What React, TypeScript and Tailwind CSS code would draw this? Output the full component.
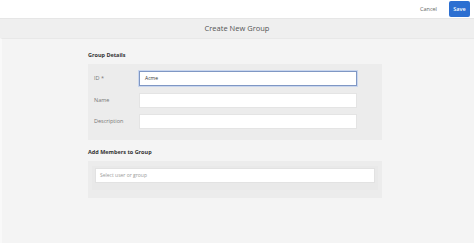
import React from 'react';

const font = { fontFamily: '"Open Sans", "Liberation Sans", sans-serif' };

const FieldRow: React.FC<{ label: string; value?: string; focused?: boolean }> = ({ label, value, focused }) => (
  <div className="flex items-center h-[15px]">
    <div className="w-[51px] pl-[6px] text-[5.5px] text-[#777]">{label}</div>
    <div
      className={`w-[218px] h-[15px] flex items-center px-[5px] text-[5px] text-[#333] bg-white border ${
        focused ? 'border-[#7f97c4] shadow-[0_0_0_1px_#c9d6ee]' : 'border-[#e4e4e4]'
      }`}
    >
      {value}
    </div>
  </div>
);

export default function App() {
  return (
    <div className="w-[474px] h-[246px] bg-white flex flex-col overflow-hidden" style={font}>
      {/* Top action bar */}
      <div className="h-[18px] flex items-start justify-end bg-white">
        <span className="mt-[5px] mr-[12px] text-[5.5px] text-[#666]">Cancel</span>
        <button className="mt-[1px] mr-[4px] w-[21px] h-[16px] rounded-[2px] bg-[#2c6fd1] text-white text-[5.5px] font-semibold">
          Save
        </button>
      </div>

      {/* Title bar */}
      <div className="h-[20px] bg-[#efefef] border-t border-[#e6e6e6] flex items-center justify-center text-[7.5px] text-[#555]">
        Create New Group
      </div>

      {/* Content */}
      <div className="flex-1 bg-[#f4f4f4] border-t border-[#e8e8e8] border-l-2 border-l-[#f9f9f9]">
        <div className="ml-[86px] w-[294px] flex flex-col">
          <div className="mt-[12px] h-[9px] text-[5.5px] font-bold text-[#333]">Group Details</div>
          <div className="mt-[4px] bg-[#ececec] pt-[7px] pb-[11px] flex flex-col gap-[6.5px]">
            <FieldRow label="ID *" value="Acme" focused />
            <FieldRow label="Name" />
            <FieldRow label="Description" />
          </div>

          <div className="mt-[8px] h-[9px] text-[5.5px] font-bold text-[#333]">Add Members to Group</div>
          <div className="mt-[4px] bg-[#ececec] pt-[5px] pb-[8px] px-[4px]">
            <div className="bg-[#e9e9e9] pt-[2px] pb-[7px] px-[3px]">
              <div className="h-[15px] bg-white border border-[#e2e2e2] flex items-center px-[4px] text-[5px] text-[#999]">
                Select user or group
              </div>
            </div>
          </div>
        </div>
      </div>
      <div className="h-[3px] bg-white"></div>
    </div>
  );
}
